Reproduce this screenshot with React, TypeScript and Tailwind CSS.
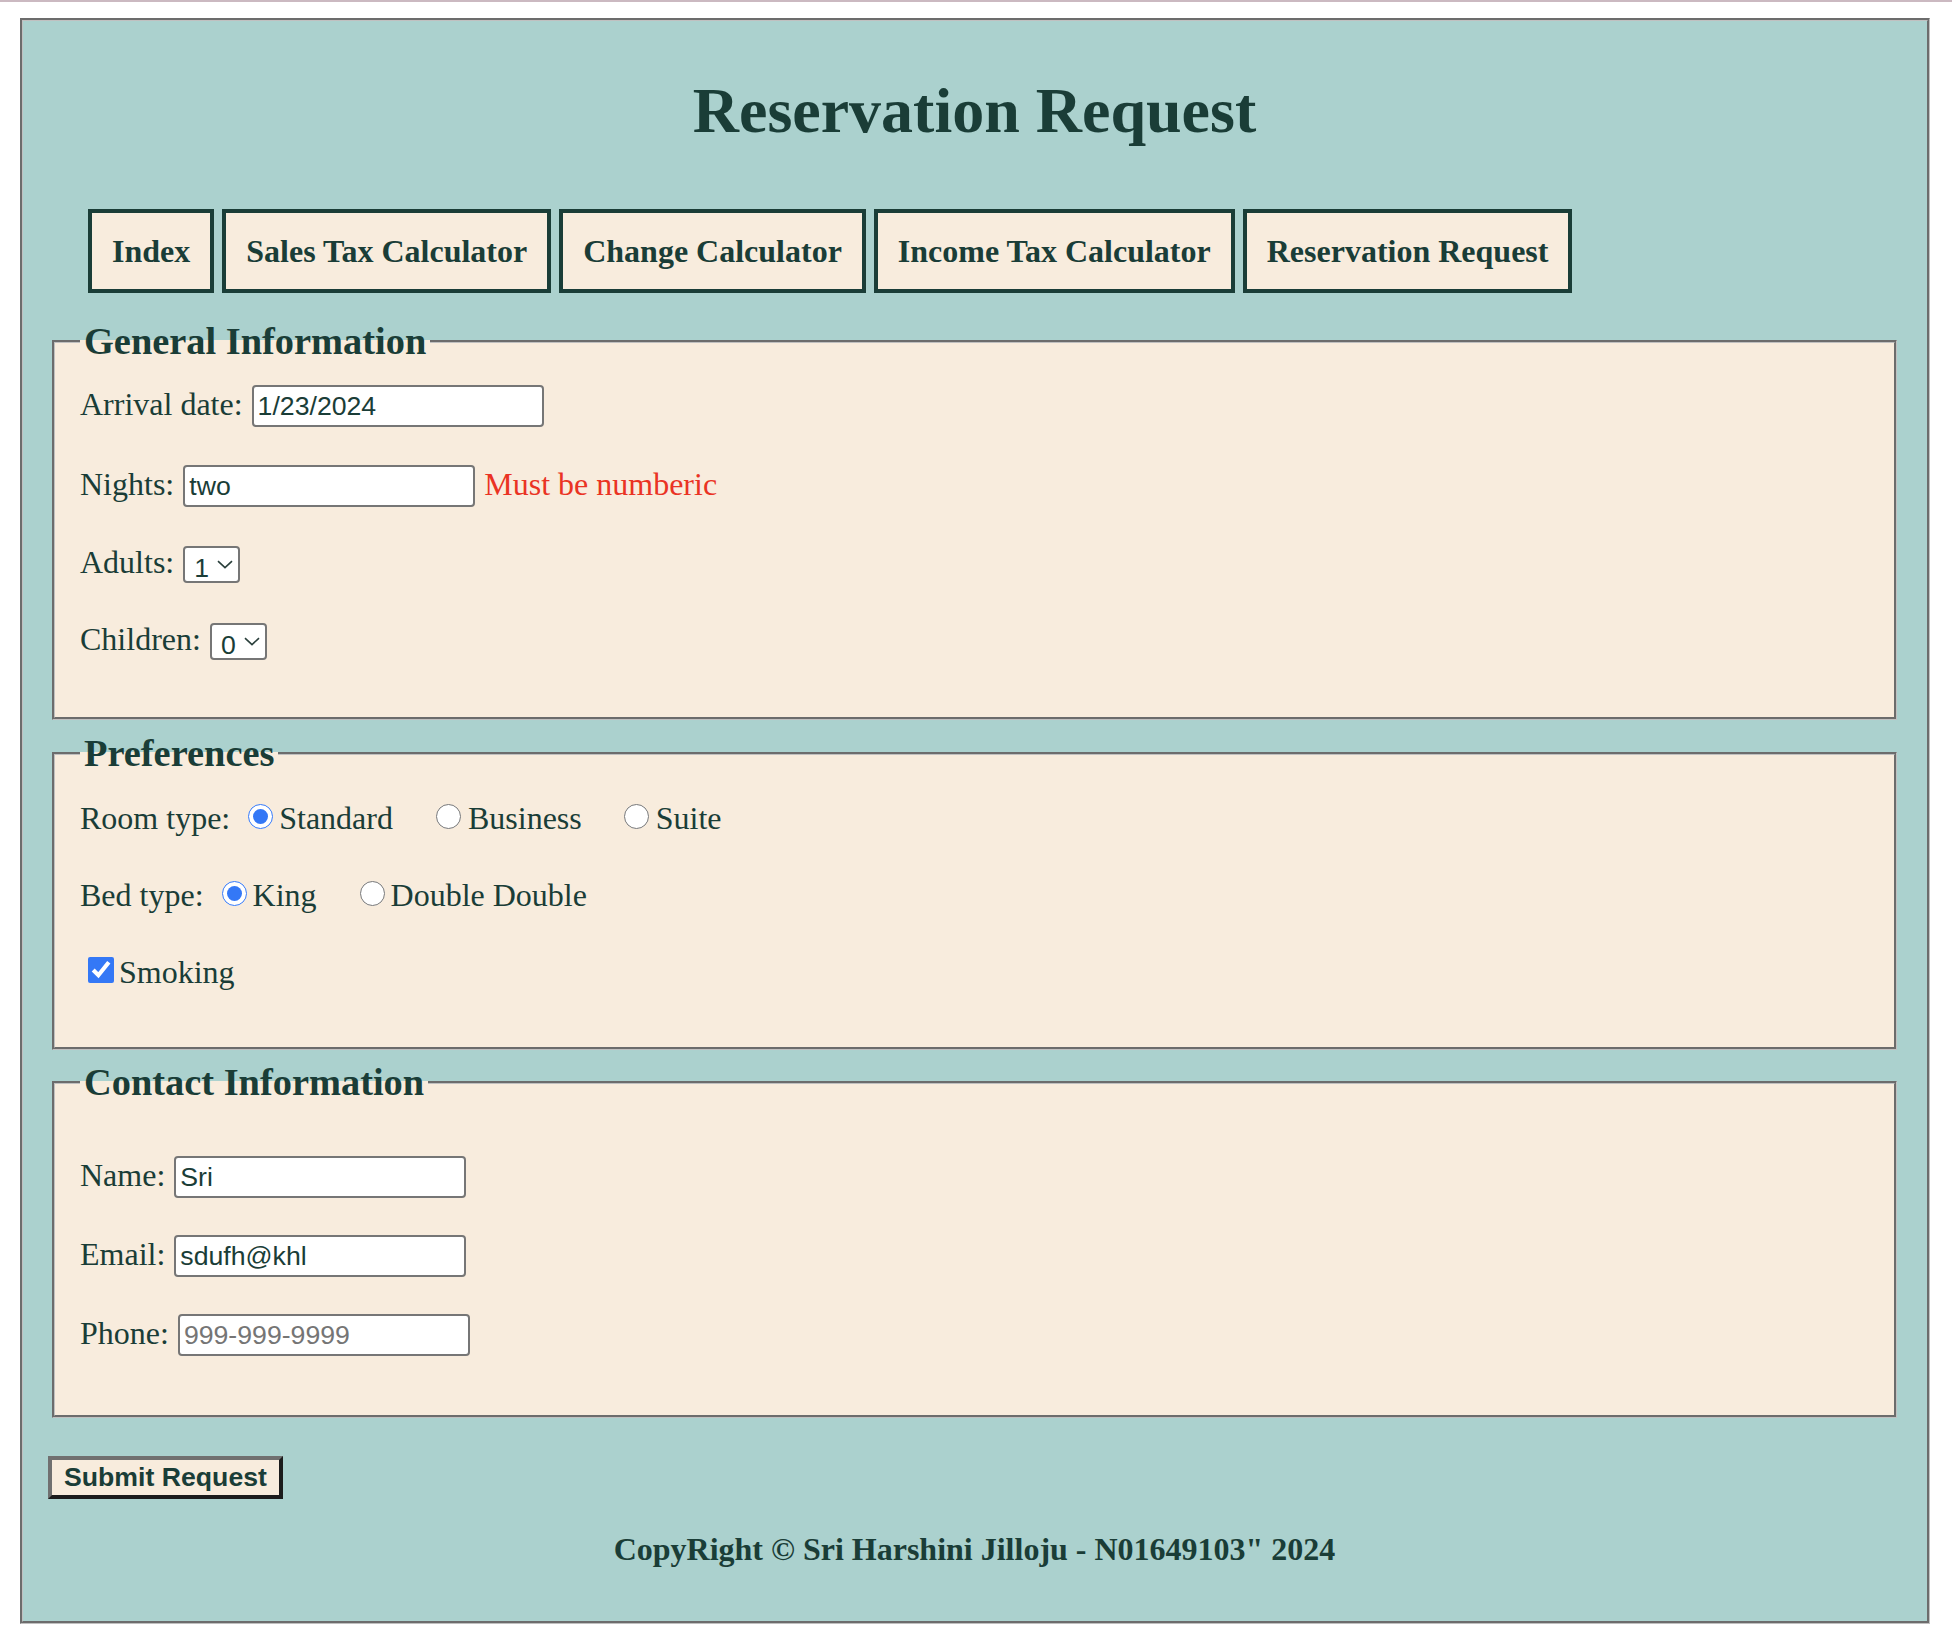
import React from "react";

const TABS = [
  "Index",
  "Sales Tax Calculator",
  "Change Calculator",
  "Income Tax Calculator",
  "Reservation Request",
];

const inputCls =
  "ml-[9px] h-[42px] w-[292px] rounded-[4px] border-2 border-[#767676] bg-white px-[4px] font-['Liberation_Sans',Arial,sans-serif] text-[26.67px] leading-normal text-[#1a3d37] outline-none placeholder:text-[#757575]";

const fieldsetCls =
  "mx-[4px] border-[3px] [--tw-border-style:groove] [border-style:groove] border-[#c0c0c0] bg-[#f8ecdd] px-[25px]";

const legendCls = "px-[4px] text-[38.4px] font-bold leading-[44px]";

const Select: React.FC<{ value: string; options: string[] }> = ({ value, options }) => (
  <span className="relative ml-[9px] mt-[6px] inline-flex">
    <select
      defaultValue={value}
      className="h-[37px] w-[57px] appearance-none rounded-[4px] border-2 border-[#767676] bg-white pl-[9px] font-['Liberation_Sans',Arial,sans-serif] text-[26.67px] leading-normal text-[#1a3d37] outline-none"
    >
      {options.map((o) => (
        <option key={o}>{o}</option>
      ))}
    </select>
    {/* chevron */}
    <svg
      className="pointer-events-none absolute right-[7px] top-[14px]"
      width="16"
      height="9"
      viewBox="0 0 16 9"
    >
      <path d="M1 1.2 8 7.6 15 1.2" fill="none" stroke="#2a3f3b" strokeWidth="1.6" />
    </svg>
  </span>
);

const App: React.FC = () => {
  return (
    <div className="min-h-[1644px] bg-white font-['Liberation_Serif','Times_New_Roman',serif] text-[#1a3d37]">
      <div className="h-[2px] bg-[#cbb9c1]"></div>

      <main className="ml-[20px] mt-[16px] w-[1910px] border-[3px] [--tw-border-style:groove] [border-style:groove] border-[#c0c0c0] bg-[#abd1ce] pb-[54px] pl-[25px] pr-[26px] pt-[53px]">
        <h1 className="text-center text-[64px] font-bold leading-[74px]">Reservation Request</h1>

        {/* Nav tabs */}
        <nav className="ml-[40px] mt-[61px] flex gap-[8px]">
          {TABS.map((tab) => (
            <a
              key={tab}
              href="#"
              className="border-4 border-[#1a3d37] bg-[#f8ecdd] px-[20px] py-[20px] text-[32px] font-bold leading-[36px] whitespace-nowrap"
            >
              {tab}
            </a>
          ))}
        </nav>

        <form className="text-[32px] leading-[36px]" onSubmit={(e) => e.preventDefault()}>
          {/* General Information */}
          <fieldset className={`${fieldsetCls} mt-[26px] pb-[57px]`}>
            <legend className={legendCls}>General Information</legend>
            <div className="mt-[22px] flex items-baseline">
              <label>Arrival date:</label>
              <input type="text" defaultValue="1/23/2024" className={inputCls} />
            </div>
            <div className="mt-[38px] flex items-baseline">
              <label>Nights:</label>
              <input type="text" defaultValue="two" className={inputCls} />
              <span className="ml-[9px] text-[#ea3323]">Must be numberic</span>
            </div>
            <div className="mt-[33px] flex items-center">
              <label>Adults:</label>
              <Select value="1" options={["1", "2", "3", "4"]} />
            </div>
            <div className="mt-[34px] flex items-center">
              <label>Children:</label>
              <Select value="0" options={["0", "1", "2", "3", "4"]} />
            </div>
          </fieldset>

          {/* Preferences */}
          <fieldset className={`${fieldsetCls} mt-[11px] pb-[57px]`}>
            <legend className={legendCls}>Preferences</legend>
            <div className="mt-[25px] flex items-baseline">
              <span>Room type:</span>
              <input type="radio" name="room" defaultChecked className="ml-[18px] mr-[6px] h-[25px] w-[25px] accent-[#3478f6]" />
              <span>Standard</span>
              <input type="radio" name="room" className="ml-[43px] mr-[7px] h-[25px] w-[25px] accent-[#3478f6]" />
              <span>Business</span>
              <input type="radio" name="room" className="ml-[42px] mr-[7px] h-[25px] w-[25px] accent-[#3478f6]" />
              <span>Suite</span>
            </div>
            <div className="mt-[41px] flex items-baseline">
              <span>Bed type:</span>
              <input type="radio" name="bed" defaultChecked className="ml-[18px] mr-[6px] h-[25px] w-[25px] accent-[#3478f6]" />
              <span>King</span>
              <input type="radio" name="bed" className="ml-[43px] mr-[6px] h-[25px] w-[25px] accent-[#3478f6]" />
              <span>Double Double</span>
            </div>
            <div className="mt-[41px] flex items-baseline">
              <input
                type="checkbox"
                defaultChecked
                className="ml-[8px] mr-[5px] h-[26px] w-[26px] accent-[#3478f6]"
              />
              <span>Smoking</span>
            </div>
          </fieldset>

          {/* Contact Information */}
          <fieldset className={`${fieldsetCls} mt-[10px] pb-[59px]`}>
            <legend className={legendCls}>Contact Information</legend>
            <div className="mt-[52px] flex items-baseline">
              <label>Name:</label>
              <input type="text" defaultValue="Sri" className={inputCls} />
            </div>
            <div className="mt-[37px] flex items-baseline">
              <label>Email:</label>
              <input type="text" defaultValue="sdufh@khl" className={inputCls} />
            </div>
            <div className="mt-[37px] flex items-baseline">
              <label>Phone:</label>
              <input type="text" placeholder="999-999-9999" className={inputCls} />
            </div>
          </fieldset>

          <button
            type="submit"
            className="mt-[38px] h-[43px] border-4 border-t-[#707070] border-l-[#707070] border-b-[#1c1c1c] border-r-[#1c1c1c] bg-[#f8ecdd] px-[12px] font-['Liberation_Sans',Arial,sans-serif] text-[26.67px] font-bold leading-[31px] text-[#1a3d37]"
          >
            Submit Request
          </button>
        </form>

        <p className="mt-[32px] text-center text-[32px] font-bold leading-[36px]">
          CopyRight © Sri Harshini Jilloju - N01649103" 2024
        </p>
      </main>
    </div>
  );
};

export default App;
